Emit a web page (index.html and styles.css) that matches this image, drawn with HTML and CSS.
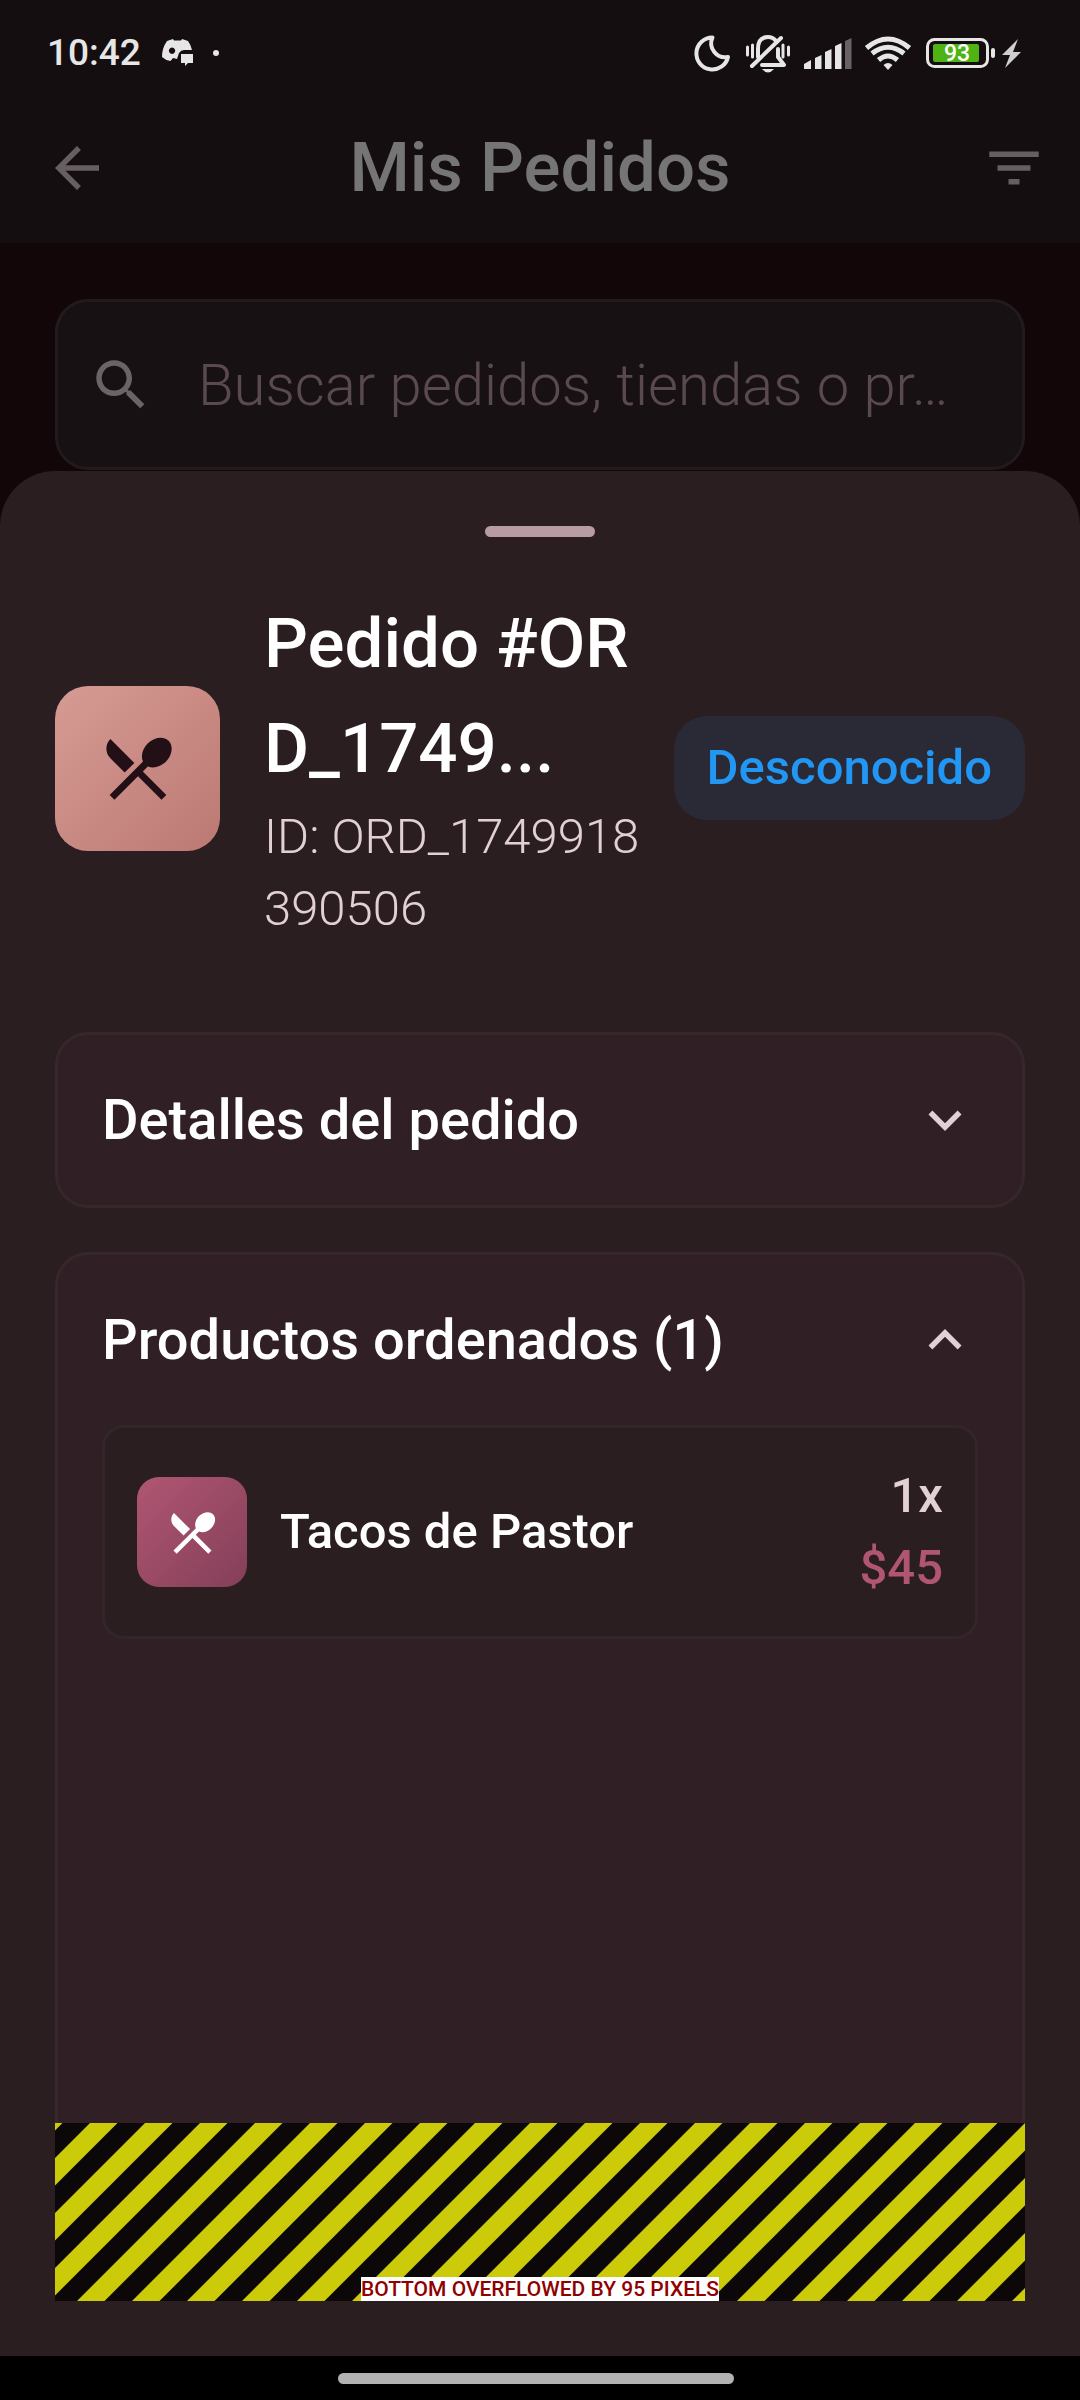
FILE: index.html
```html
<!DOCTYPE html>
<html lang="es">
<head>
<meta charset="utf-8">
<meta name="viewport" content="width=device-width, initial-scale=1">
<title>Mis Pedidos</title>
<link rel="stylesheet" href="styles.css">
</head>
<body>
<svg class="defs" width="0" height="0" aria-hidden="true">
  <symbol id="cutlery" viewBox="0 0 24 24"><path d="M8.1 13.34l2.83-2.83L3.91 3.5c-1.56 1.56-1.56 4.09 0 5.66l4.19 4.18zm6.78-1.81c1.53.71 3.68.21 5.27-1.38 1.91-1.91 2.28-4.65.81-6.12-1.46-1.46-4.2-1.1-6.12.81-1.59 1.59-2.09 3.74-1.38 5.27L3.7 19.87l1.41 1.41L12 14.41l6.88 6.88 1.41-1.41L13.41 13l1.47-1.47z"/></symbol>
</svg>

<div class="statusbar">
  <span class="clock">10:42</span>
  <svg class="discord" viewBox="0 0 32 30" width="32" height="30" aria-hidden="true">
    <path fill-rule="evenodd" d="M5 3L11 1L12 2.500H19L20 1L26 3Q29 7 30 12H22Q19 12 17 15L15 21L11 20L8.500 23Q3 22 0 19Q0 10 5 3ZM10 9.500a3.200 3.200 0 1 0 .1 0Z"/>
    <path d="M19 16H31V25H26L23 28V25H19Z"/>
  </svg>
  <span class="dot"></span>
  <svg class="status-icons" viewBox="690 26 340 52" width="340" height="52" aria-hidden="true">
    <path class="line" d="M712.500 36.500A16 16 0 1 0 728 56A14 14 0 0 1 712.500 36.500Z"/>
    <path class="line" d="M758 56V48Q758 36 768 36Q773 36 776 40M778 48V56L784 64H762M781 37L752 65"/>
    <path class="wave-tick" d="M747.500 46V54M752.500 44V56M783 44V56M788.500 46V54"/>
    <path d="M762 68H774Q768 75 762 68Z"/>
    <path d="M804 63L811 59V68H804ZM815 57L821.500 54V68H815ZM825 51L831.500 48V68H825ZM835 45L841.500 42V68H835Z"/>
    <path class="faint" d="M845 40L851.500 37V68H845Z"/>
    <path class="wave" d="M866.500 47Q888 29 909.500 47M872 52.500Q888 40 904 52.500M878.500 59Q888 51 897.500 59"/>
    <path d="M883.500 64Q888 60 892.500 64L888 69Z"/>
    <rect class="shell" x="927.500" y="38.500" width="60" height="27" rx="7"/>
    <rect class="charge" x="933" y="43" width="46" height="18" rx="2"/>
    <rect x="991" y="47" width="4" height="10" rx="2"/>
    <path class="bolt" d="M1018 38L1002 54H1010L1005 67L1021 51H1013Z"/>
    <text class="percent" x="957" y="60" text-anchor="middle">93</text>
  </svg>
</div>

<header class="appbar">
  <button class="icon-button" aria-label="Volver"><svg viewBox="0 0 24 24"><path d="M20 11H7.830l5.590-5.590L12 4l-8 8 8 8 1.410-1.410L7.830 13H20v-2z"/></svg></button>
  <h1>Mis Pedidos</h1>
  <button class="icon-button icon-end" aria-label="Filtrar"><svg viewBox="0 0 24 24"><path d="M10 18h4v-2h-4v2zM3 6v2h18V6H3zm3 7h12v-2H6v2z"/></svg></button>
</header>

<label class="search">
  <svg viewBox="0 0 24 24" aria-hidden="true"><path d="M15.500 14h-.79l-.28-.27C15.410 12.590 16 11.110 16 9.500 16 5.910 13.090 3 9.500 3S3 5.910 3 9.500 5.910 16 9.500 16c1.610 0 3.090-.59 4.230-1.570l.27.28v.79l5 4.990L20.490 19l-4.990-5zm-6 0C7.010 14 5 11.990 5 9.500S7.010 5 9.500 5 14 7.010 14 9.500 11.990 14 9.500 14z"/></svg>
  <input type="text" aria-label="Buscar" placeholder="Buscar pedidos, tiendas o pr…">
</label>

<main class="sheet">
  <div class="handle"></div>
  <section class="order">
    <div class="tile tile-large"><svg><use href="#cutlery"/></svg></div>
    <div class="order-text">
      <h2>Pedido #OR<br>D_1749...</h2>
      <p>ID: ORD_1749918<br>390506</p>
    </div>
    <span class="badge">Desconocido</span>
  </section>

  <section class="card">
    <button class="card-head" aria-expanded="false">Detalles del pedido
      <svg viewBox="0 0 24 24" aria-hidden="true"><path d="M16.590 8.590L12 13.170 7.410 8.590 6 10l6 6 6-6z"/></svg></button>
  </section>

  <section class="card card-open">
    <button class="card-head" aria-expanded="true">Productos ordenados (1)
      <svg viewBox="0 0 24 24" aria-hidden="true"><path d="M12 8l-6 6 1.410 1.410L12 10.830l4.590 4.580L18 14z"/></svg></button>
    <div class="product">
      <div class="tile tile-small"><svg><use href="#cutlery"/></svg></div>
      <span class="name">Tacos de Pastor</span>
      <div class="amount"><span>1x</span><span class="price">$45</span></div>
    </div>
    <div class="overflow">
      <svg class="stripes" aria-hidden="true">
        <defs>
          <pattern id="hazard" width="55" height="55" patternUnits="userSpaceOnUse">
            <path d="M-20 0H7.500L-47.500 55H-75ZM35 0H62.500L7.500 55H-20ZM90 0H117.500L62.500 55H35Z"/>
          </pattern>
        </defs>
        <rect width="100%" height="100%" fill="url(#hazard)"/>
      </svg>
      <span>BOTTOM OVERFLOWED BY 95 PIXELS</span>
    </div>
  </section>
</main>

<div class="navbar"><div class="pill"></div></div>
</body>
</html>
```

FILE: styles.css
```css
* { box-sizing: border-box; }

body {
  margin: 0;
  min-height: 100vh;
  display: flex;
  flex-direction: column;
  background: #120609;
  color: #fff;
  font-family: Roboto, "Liberation Sans", sans-serif;
}

h1, h2, p { margin: 0; font-weight: 500; }
svg { display: block; fill: currentColor; }
.defs { position: absolute; }

button {
  border: 0;
  padding: 0;
  background: none;
  color: inherit;
  font: inherit;
  text-align: left;
}

/* Status bar */
.statusbar {
  display: flex;
  align-items: center;
  height: 92px;
  padding: 13px 50px 0 47px;
  background: #140e10;
  color: #e6e6e6;
}
.clock { font-size: 37px; font-weight: 500; }
.discord { margin-left: 21px; }
.dot {
  width: 6px;
  height: 6px;
  margin-left: 19px;
  border-radius: 50%;
  background: currentColor;
}
.status-icons { margin-left: auto; }
.line, .shell, .wave-tick { fill: none; stroke: currentColor; stroke-width: 4; stroke-linecap: round; stroke-linejoin: round; }
.shell, .wave-tick { stroke-width: 3; }
.wave { fill: none; stroke: currentColor; stroke-width: 5; }
.faint { fill: #676263; }
.charge { fill: #4fb215; }
.bolt { fill: #d0cfcf; }
.percent { font-size: 23px; font-weight: 500; fill: #fff; }

/* App bar */
.appbar {
  display: grid;
  grid-template-columns: 1fr auto 1fr;
  align-items: center;
  height: 151px;
  padding: 0 33px;
  background: #140e10;
  color: #665e60;
}
.appbar h1 { color: #757575; font-size: 69px; }
.icon-button { justify-self: start; margin-left: 11px; }
.icon-end { justify-self: end; margin-left: 0; }
.icon-button svg { width: 66px; height: 66px; }

/* Search */
.search {
  display: flex;
  align-items: center;
  gap: 44px;
  height: 171px;
  margin: 56px 55px 1px;
  padding: 0 30px;
  border: 3px solid #211b1d;
  border-radius: 33px;
  background: #171113;
  color: #6b6465;
}
.search svg { flex: none; width: 66px; height: 66px; }
.search input {
  flex: 1;
  min-width: 0;
  padding: 0;
  border: 0;
  outline: 0;
  background: none;
  color: #fff;
  font: 300 58px Roboto, "Liberation Sans", sans-serif;
}
.search input::placeholder { color: #5a4a4e; opacity: 1; }

/* Bottom sheet */
.sheet {
  flex: 1;
  display: flex;
  flex-direction: column;
  padding: 55px;
  border-radius: 55px 55px 0 0;
  background: #2a1e21;
}
.handle {
  align-self: center;
  width: 110px;
  height: 11px;
  border-radius: 6px;
  background: #b99ba3;
}

.order {
  display: flex;
  align-items: center;
  margin: 54px 0 87px;
}
.order-text { flex: 1; min-width: 0; margin-left: 44px; white-space: nowrap; }
.order-text h2 { font-size: 69px; line-height: 105px; }
.order-text p { color: #e3d0d5; font-size: 49px; font-weight: 300; line-height: 72px; }

.tile { display: flex; flex: none; align-items: center; justify-content: center; }
.tile-large {
  width: 165px;
  height: 165px;
  border-radius: 33px;
  background: linear-gradient(135deg, #d69b94, #bc7973);
  color: #230f16;
}
.tile-large svg { width: 82px; height: 82px; }
.tile-small {
  width: 110px;
  height: 110px;
  border-radius: 22px;
  background: linear-gradient(135deg, #b05673, #843f58);
}
.tile-small svg { width: 55px; height: 55px; }

.badge {
  flex: none;
  padding: 16px 33px;
  border-radius: 33px;
  background: #2a2936;
  color: #2196f3;
  font-size: 49px;
  font-weight: 500;
  line-height: 72px;
}

/* Cards */
.card {
  position: relative;
  margin-bottom: 44px;
  padding: 0 44px;
  border: 3px solid #37272c;
  border-radius: 33px;
  background: #301f24;
}
.card-open { flex: 1; margin-bottom: 0; }
.card-head {
  display: flex;
  align-items: center;
  justify-content: space-between;
  width: 100%;
  height: 170px;
  font-size: 56px;
  font-weight: 500;
}
.card-head svg { width: 66px; height: 66px; color: #e3d0d5; }

.product {
  display: flex;
  align-items: center;
  padding: 32px;
  border: 3px solid #32262a;
  border-radius: 22px;
  background: #2a1e21;
  font-size: 49px;
  font-weight: 500;
  line-height: 72px;
}
.name { flex: 1; margin-left: 33px; }
.amount { display: flex; flex-direction: column; align-items: flex-end; color: #e3d0d5; }
.price { color: #b05673; }

/* Warning stripes over the bottom of the open card */
.overflow {
  position: absolute;
  right: -3px;
  bottom: -3px;
  left: -3px;
  display: flex;
  align-items: flex-end;
  justify-content: center;
  height: 178px;
}
.stripes {
  position: absolute;
  inset: 0;
  width: 100%;
  height: 100%;
  background: #0c0709;
  fill: #cbcb09;
}
.overflow span {
  position: relative;
  background: #fff;
  color: #900000;
  font-size: 21px;
  font-weight: 500;
  line-height: 24px;
}

/* Navigation bar */
.navbar {
  display: flex;
  align-items: center;
  justify-content: center;
  height: 44px;
  padding-right: 8px;
  background: #000;
}
.pill { width: 37%; height: 11px; border-radius: 6px; background: #b2b2b2; }
```
